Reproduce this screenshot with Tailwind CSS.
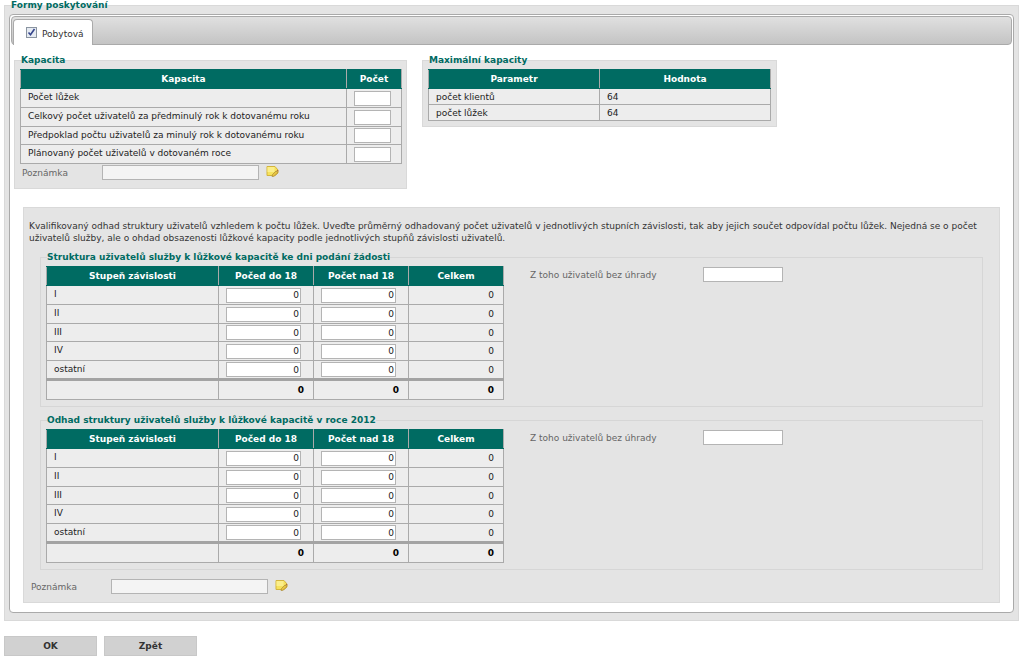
<!DOCTYPE html>
<html lang="cs">
<head>
<meta charset="utf-8">
<title>Formy poskytování</title>
<script src="https://cdn.jsdelivr.net/npm/@tailwindcss/browser@4"></script>
</head>
<body class="bg-white font-['Verdana','DejaVu_Sans',sans-serif] text-[9px] leading-[12px] text-[#333]">
<svg class="hidden" aria-hidden="true">
  <symbol id="note" viewBox="0 0 13 13">
    <path d="M1 1.500h8l3 3.500v3l-3 2.500H1z" fill="#f6e25c" stroke="#d3b43c"/>
    <path d="M1.500 2h7v5h-7z" fill="#fbee8a"/>
    <path d="M6 11.500l.5-2 3.500-3.500 1.800 1.800L8 11.300z" fill="#e8c440" stroke="#a88a38" stroke-width=".7"/>
    <path d="M10.500 5.500l.8-.8 1.300 1.300-.8.800z" fill="#a8653c"/>
  </symbol>
</svg>
<form>
<fieldset class="ml-1 mr-[5px] border border-[#d9d9d9] bg-[#e4e4e4] px-1 pb-[7px]">
  <legend class="ml-[2px] h-[11px] font-bold leading-[11px] text-[#006b62]">Formy poskytování</legend>
  <div class="mt-[3px] rounded border border-[#aaa] bg-white px-px pt-px pb-[9px]">
    <div class="flex h-[29px] items-end rounded border border-[#aaa] bg-linear-to-b from-[#e0e0e0] to-[#c4c4c4] pl-px">
      <label class="-mb-px flex h-[26px] items-center rounded-t border border-b-0 border-[#aaa] bg-white pl-3 pr-2 pt-[2px]">
        <input type="checkbox" checked class="peer sr-only">
        <span class="mr-[5px] -mt-[2px] flex size-[11px] items-center justify-center border border-[#8a94a0] bg-[#e6ebf2]">
          <svg viewBox="0 0 9 9" class="size-[9px]" fill="none" stroke="#35458c" stroke-width="1.600"><path d="M1.500 4.500l2 2.300L7.500 1"/></svg>
        </span>
        Pobytová
      </label>
    </div>

    <div class="flex items-start gap-[15px] pl-[3px] pt-[10px]">
      <fieldset class="w-[393px] border border-[#d9d9d9] bg-[#e4e4e4] pl-[5px] pr-1 pb-2">
        <legend class="ml-px h-[11px] font-bold leading-[11px] text-[#006b62]">Kapacita</legend>
        <table class="mt-[3px] w-full table-fixed border-collapse bg-[#ededed] text-[#222] [&_td]:border [&_td]:border-[#aaa] [&_td]:py-0 [&_td]:pl-[7px] [&_td]:leading-[12px] [&_td]:first:pb-[2px] [&_th]:border [&_th]:border-x-[#aaa] [&_th]:border-y-[#006b62] [&_th]:bg-[#006b62] [&_th]:text-white [&_tr]:h-[19px] [&_tbody_tr]:nth-3:h-[18px]">
          <colgroup><col><col class="w-[55px]"></colgroup>
          <thead><tr><th>Kapacita</th><th>Počet</th></tr></thead>
          <tbody>
            <tr><td><label for="k1">Počet lůžek</label></td><td><input id="k1" class="block h-[15px] w-[37px] border border-[#b4b4b4] bg-white px-px"></td></tr>
            <tr><td><label for="k2">Celkový počet uživatelů za předminulý rok k dotovanému roku</label></td><td><input id="k2" class="block h-[15px] w-[37px] border border-[#b4b4b4] bg-white px-px"></td></tr>
            <tr><td><label for="k3">Předpoklad počtu uživatelů za minulý rok k dotovanému roku</label></td><td><input id="k3" class="block h-[15px] w-[37px] border border-[#b4b4b4] bg-white px-px"></td></tr>
            <tr><td><label for="k4">Plánovaný počet uživatelů v dotovaném roce</label></td><td><input id="k4" class="block h-[15px] w-[37px] border border-[#b4b4b4] bg-white px-px"></td></tr>
          </tbody>
        </table>
        <div class="mt-px flex items-center pl-[2px] text-[#666]">
          <label for="n1" class="w-20">Poznámka</label>
          <input id="n1" readonly class="block h-[15px] w-[157px] border border-[#b4b4b4] bg-[#f4f4f4] px-px">
          <button type="button" aria-label="Upravit poznámku" class="ml-[7px] -mt-[2px]"><svg class="block size-[13px]"><use href="#note"/></svg></button>
        </div>
      </fieldset>

      <fieldset class="w-[355px] border border-[#d9d9d9] bg-[#e4e4e4] px-[5px] pb-[5px]">
        <legend class="ml-px h-[11px] font-bold leading-[11px] text-[#006b62]">Maximální kapacity</legend>
        <table class="mt-[3px] w-full table-fixed border-collapse bg-[#ededed] text-[#222] [&_td]:border [&_td]:border-[#aaa] [&_td]:py-0 [&_td]:pl-[7px] [&_td]:leading-[12px] [&_th]:border [&_th]:border-x-[#aaa] [&_th]:border-y-[#006b62] [&_th]:bg-[#006b62] [&_th]:text-white [&_thead_tr]:h-[19px] [&_tbody_tr]:h-4">
          <thead><tr><th>Parametr</th><th>Hodnota</th></tr></thead>
          <tbody>
            <tr><td>počet klientů</td><td>64</td></tr>
            <tr><td>počet lůžek</td><td>64</td></tr>
          </tbody>
        </table>
      </fieldset>
    </div>

    <section class="mx-3 mt-[18px] border border-[#d9d9d9] bg-[#e4e4e4] pb-2">
      <p class="pl-[5px] pr-4 pt-3">Kvalifikovaný odhad struktury uživatelů vzhledem k počtu lůžek. Uveďte průměrný odhadovaný počet uživatelů v jednotlivých stupních závislosti, tak aby jejich součet odpovídal počtu lůžek. Nejedná se o počet uživatelů služby, ale o ohdad obsazenosti lůžkové kapacity podle jednotlivých stupňů závislosti uživatelů.</p>

      <fieldset class="mx-4 mt-2 border border-[#d6d6d6] px-[5px] pb-[6px]">
        <legend class="ml-px h-[11px] font-bold leading-[11px] text-[#006b62]">Struktura uživatelů služby k lůžkové kapacitě ke dni podání žádosti</legend>
        <div class="mt-[3px] flex items-start">
          <table class="w-[458px] table-fixed border-collapse bg-[#ededed] text-[#222] [&_input]:block [&_input]:h-[15px] [&_input]:w-[75px] [&_input]:border [&_input]:border-[#b4b4b4] [&_input]:bg-white [&_input]:px-px [&_input]:text-right [&_td]:border [&_td]:border-[#aaa] [&_td]:py-0 [&_td]:pl-[7px] [&_tbody_td]:first:pb-[2px] [&_td]:last:pr-[9px] [&_td]:last:text-right [&_tfoot_td]:pr-[9px] [&_tfoot_td]:text-right [&_tfoot_td]:font-bold [&_tfoot_td]:text-black [&_th]:border [&_th]:border-x-[#aaa] [&_th]:border-y-[#006b62] [&_th]:bg-[#006b62] [&_th]:text-white [&_tr]:h-[19px] [&_tbody_tr]:nth-3:h-[18px] [&_tfoot_tr]:h-5">
            <colgroup><col><col class="w-[95px]"><col class="w-[95px]"><col class="w-[95px]"></colgroup>
            <thead><tr><th>Stupeň závislosti</th><th>Počed do 18</th><th>Počet nad 18</th><th>Celkem</th></tr></thead>
            <tbody>
              <tr><td>I</td><td><input aria-label="I, do 18" value="0"></td><td><input aria-label="I, nad 18" value="0"></td><td>0</td></tr>
              <tr><td>II</td><td><input aria-label="II, do 18" value="0"></td><td><input aria-label="II, nad 18" value="0"></td><td>0</td></tr>
              <tr><td>III</td><td><input aria-label="III, do 18" value="0"></td><td><input aria-label="III, nad 18" value="0"></td><td>0</td></tr>
              <tr><td>IV</td><td><input aria-label="IV, do 18" value="0"></td><td><input aria-label="IV, nad 18" value="0"></td><td>0</td></tr>
              <tr><td>ostatní</td><td><input aria-label="ostatní, do 18" value="0"></td><td><input aria-label="ostatní, nad 18" value="0"></td><td>0</td></tr>
            </tbody>
            <tfoot class="border-t-3 border-[#a3a3a3]"><tr><td></td><td>0</td><td>0</td><td>0</td></tr></tfoot>
          </table>
          <div class="ml-[26px] mt-px flex items-center text-[#666]">
            <label for="u1" class="w-[173px]">Z toho uživatelů bez úhrady</label>
            <input id="u1" class="block h-[15px] w-20 border border-[#b4b4b4] bg-white px-px">
          </div>
        </div>
      </fieldset>

      <fieldset class="mx-4 mt-2 border border-[#d6d6d6] px-[5px] pb-[6px]">
        <legend class="ml-px h-[11px] font-bold leading-[11px] text-[#006b62]">Odhad struktury uživatelů služby k lůžkové kapacitě v roce 2012</legend>
        <div class="mt-[3px] flex items-start">
          <table class="w-[458px] table-fixed border-collapse bg-[#ededed] text-[#222] [&_input]:block [&_input]:h-[15px] [&_input]:w-[75px] [&_input]:border [&_input]:border-[#b4b4b4] [&_input]:bg-white [&_input]:px-px [&_input]:text-right [&_td]:border [&_td]:border-[#aaa] [&_td]:py-0 [&_td]:pl-[7px] [&_tbody_td]:first:pb-[2px] [&_td]:last:pr-[9px] [&_td]:last:text-right [&_tfoot_td]:pr-[9px] [&_tfoot_td]:text-right [&_tfoot_td]:font-bold [&_tfoot_td]:text-black [&_th]:border [&_th]:border-x-[#aaa] [&_th]:border-y-[#006b62] [&_th]:bg-[#006b62] [&_th]:text-white [&_tr]:h-[19px] [&_tbody_tr]:nth-3:h-[18px] [&_tfoot_tr]:h-5">
            <colgroup><col><col class="w-[95px]"><col class="w-[95px]"><col class="w-[95px]"></colgroup>
            <thead><tr><th>Stupeň závislosti</th><th>Počed do 18</th><th>Počet nad 18</th><th>Celkem</th></tr></thead>
            <tbody>
              <tr><td>I</td><td><input aria-label="I, do 18" value="0"></td><td><input aria-label="I, nad 18" value="0"></td><td>0</td></tr>
              <tr><td>II</td><td><input aria-label="II, do 18" value="0"></td><td><input aria-label="II, nad 18" value="0"></td><td>0</td></tr>
              <tr><td>III</td><td><input aria-label="III, do 18" value="0"></td><td><input aria-label="III, nad 18" value="0"></td><td>0</td></tr>
              <tr><td>IV</td><td><input aria-label="IV, do 18" value="0"></td><td><input aria-label="IV, nad 18" value="0"></td><td>0</td></tr>
              <tr><td>ostatní</td><td><input aria-label="ostatní, do 18" value="0"></td><td><input aria-label="ostatní, nad 18" value="0"></td><td>0</td></tr>
            </tbody>
            <tfoot class="border-t-3 border-[#a3a3a3]"><tr><td></td><td>0</td><td>0</td><td>0</td></tr></tfoot>
          </table>
          <div class="ml-[26px] mt-px flex items-center text-[#666]">
            <label for="u2" class="w-[173px]">Z toho uživatelů bez úhrady</label>
            <input id="u2" class="block h-[15px] w-20 border border-[#b4b4b4] bg-white px-px">
          </div>
        </div>
      </fieldset>

      <div class="mt-[9px] flex items-center pl-[7px] text-[#666]">
        <label for="n2" class="w-20">Poznámka</label>
        <input id="n2" readonly class="block h-[15px] w-[157px] border border-[#b4b4b4] bg-[#f4f4f4] px-px">
        <button type="button" aria-label="Upravit poznámku" class="ml-[7px] -mt-[2px]"><svg class="block size-[13px]"><use href="#note"/></svg></button>
      </div>
    </section>
  </div>
</fieldset>
<div class="ml-1 mt-[15px] flex gap-[7px]">
  <button type="button" class="h-5 w-[93px] border border-[#c8c8c8] bg-[#d1d1d1] font-bold">OK</button>
  <button type="button" class="h-5 w-[93px] border border-[#c8c8c8] bg-[#d1d1d1] font-bold">Zpět</button>
</div>
</form>
</body>
</html>
